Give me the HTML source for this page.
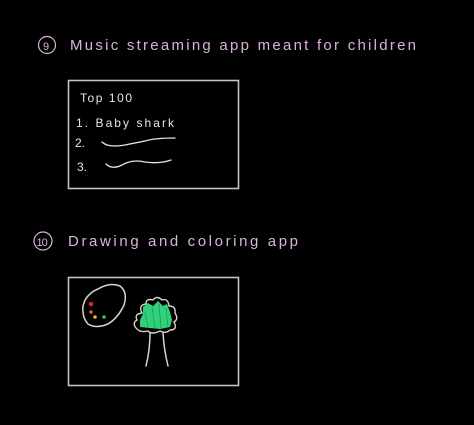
<!DOCTYPE html>
<html><head><meta charset="utf-8"><style>
html,body{margin:0;padding:0;background:#000;width:474px;height:425px;overflow:hidden}
svg{display:block}
text{font-family:"Liberation Sans",sans-serif}
</style></head><body>
<svg width="474" height="425" viewBox="0 0 474 425">
<rect width="474" height="425" fill="#000"/>
<g fill="none" stroke="#d9b3dd" stroke-width="1.2">
<circle cx="47" cy="45" r="8.5"/>
<circle cx="43" cy="241" r="9"/>
</g>
<g fill="#d9b3dd" font-size="15" font-weight="300">
<text x="43" y="50" font-size="11">9</text>
<text x="36.5" y="246" font-size="11" letter-spacing="-1">10</text>
<text x="70" y="50" textLength="346" lengthAdjust="spacing">Music  streaming  app  meant  for  children</text>
<text x="68" y="246" textLength="230" lengthAdjust="spacing">Drawing  and  coloring  app</text>
</g>
<g fill="none" stroke="#c8c4bc" stroke-width="1.6">
<rect x="68.5" y="80.5" width="170" height="108"/>
<rect x="68.5" y="277.5" width="170" height="108"/>
</g>
<g fill="#e6e6e6" font-size="12">
<text x="80" y="102" textLength="52" lengthAdjust="spacing">Top 100</text>
<text x="76" y="127" textLength="98" lengthAdjust="spacing">1. Baby shark</text>
<text x="75" y="147">2.</text>
<text x="77" y="171">3.</text>
</g>
<g fill="none" stroke="#e6e6e6" stroke-width="1.3" stroke-linecap="round">
<path d="M102 142 Q108 148 125 145 Q135 143 145 141 Q155 138 175 138"/>
<path d="M106 164 Q112 170 122 165 Q132 159 145 162 Q160 164 171 160"/>
</g>
<g fill="none" stroke="#d8d4cc" stroke-width="1.5" stroke-linecap="round">
<path d="M85 300 Q90 292 98 289 Q110 282 120 286 Q128 292 124 305 Q118 318 108 324 Q96 329 88 324 Q82 318 83 306 Z"/>
<path d="M150 333 Q150 350 146 366 M163 333 Q164 350 168 366"/>
</g>
<path d="M142 313 Q138 305 146 304 Q146 298 153 300 Q157 295 162 300 Q168 298 169 306 Q176 306 175 313 Q179 319 174 322 Q178 330 170 330 Q166 334 160 331 Q152 335 148 331 Q140 333 136 328 Q132 323 137 320 Q134 314 142 313 Z" fill="#000" stroke="#d8d4cc" stroke-width="1.4"/>
<path d="M143 307 L148 303 L153 306 L158 301 L163 306 L167 304 L170 312 L172 320 L170 327 L160 329 L150 328 L140 327 L140 320 L143 314 Z" fill="#2fd27a"/>
<g stroke="#1a8a4a" stroke-width="0.6">
<path d="M145 312 L148 327 M152 307 L155 328 M159 304 L161 328 M166 308 L168 326"/>
</g>
<circle cx="91" cy="304" r="2.3" fill="#d82a1c"/>
<circle cx="91" cy="312" r="1.8" fill="#e8651e"/>
<circle cx="95" cy="317" r="1.8" fill="#f2b51c"/>
<circle cx="104" cy="317" r="1.8" fill="#2ecc55"/>
</svg>
</body></html>
